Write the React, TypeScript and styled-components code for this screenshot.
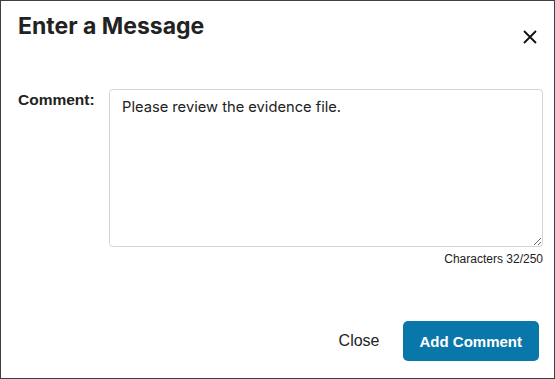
import React, { useState } from 'react'
import styled, { createGlobalStyle } from 'styled-components'

const GlobalStyle = createGlobalStyle`
  html, body {
    margin: 0;
    padding: 0;
    background: #ffffff;
  }
  * {
    box-sizing: border-box;
  }
`

const MAX_CHARS = 250

const Dialog = styled.div`
  width: 555px;
  height: 379px;
  display: flex;
  flex-direction: column;
  border: 1px solid #3f3f3f;
  background: #ffffff;
  color: #222222;
  font-family: 'Liberation Sans', Arial, sans-serif;
`

const Header = styled.div`
  display: flex;
  justify-content: space-between;
  align-items: flex-start;
  padding: 10px 15px 0 17px;
  height: 86px;
`

const Title = styled.h2`
  margin: 0;
  font-family: Inter, 'Liberation Sans', sans-serif;
  font-size: 23px;
  font-weight: 700;
  line-height: 30px;
  color: #222222;
`

const CloseIcon = styled.button`
  margin-top: 17px;
  width: 18px;
  height: 18px;
  padding: 0;
  border: none;
  background: none;
  display: flex;
  align-items: center;
  justify-content: center;
  color: #111111;
  cursor: pointer;
`

const Body = styled.div`
  display: grid;
  grid-template-columns: 91px 1fr;
  padding: 2px 11px 0 17px;
`

const Label = styled.label`
  padding-top: 2px;
  font-size: 15.5px;
  font-weight: 700;
  color: #222222;
`

const Field = styled.div`
  display: flex;
  flex-direction: column;
  align-items: flex-end;
`

const TextArea = styled.textarea`
  width: 100%;
  height: 158px;
  padding: 6px 12px;
  border: 1px solid #d4d4d4;
  border-radius: 4px;
  font-family: Inter, 'Liberation Sans', sans-serif;
  font-size: 14.7px;
  line-height: 22px;
  color: #222222;
  resize: vertical;
  outline: none;
`

const Counter = styled.div`
  margin-top: 5px;
  font-size: 12px;
  color: #222222;
`

const Footer = styled.div`
  margin-top: auto;
  display: flex;
  justify-content: flex-end;
  align-items: center;
  gap: 8px;
  padding: 0 15px 17px 0;
`

const Button = styled.button<{ $primary?: boolean }>`
  height: 40px;
  padding: 0 ${(p) => (p.$primary ? '17px' : '15px')};
  border: none;
  border-radius: 5px;
  font-family: 'Liberation Sans', Arial, sans-serif;
  font-size: ${(p) => (p.$primary ? '15px' : '16px')};
  font-weight: ${(p) => (p.$primary ? 700 : 400)};
  background: ${(p) => (p.$primary ? '#0a77aa' : 'transparent')};
  color: ${(p) => (p.$primary ? '#ffffff' : '#222222')};
  cursor: pointer;
`

const App: React.FC = () => {
  const [text, setText] = useState('Please review the evidence file.')

  return (
    <>
      <GlobalStyle />
      <Dialog>
        <Header>
          <Title>Enter a Message</Title>
          <CloseIcon aria-label="Close">
            <svg width="14" height="14" viewBox="0 0 14 14">
              <path
                d="M1 1 L13 13 M13 1 L1 13"
                stroke="currentColor"
                strokeWidth="1.8"
                fill="none"
              />
            </svg>
          </CloseIcon>
        </Header>
        <Body>
          <Label htmlFor="comment">Comment:</Label>
          <Field>
            <TextArea
              id="comment"
              value={text}
              maxLength={MAX_CHARS}
              onChange={(e) => setText(e.target.value)}
            />
            <Counter>
              Characters {text.length}/{MAX_CHARS}
            </Counter>
          </Field>
        </Body>
        <Footer>
          <Button>Close</Button>
          <Button $primary>Add Comment</Button>
        </Footer>
      </Dialog>
    </>
  )
}

export default App
